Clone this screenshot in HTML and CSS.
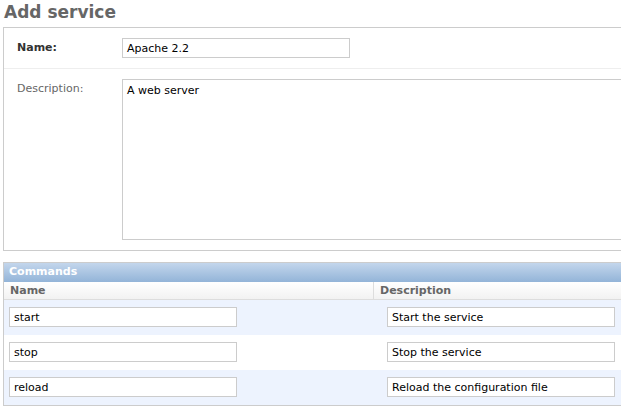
FILE: index.html
```html
<!DOCTYPE html>
<html>
<head>
<meta charset="utf-8">
<link rel="stylesheet" href="styles.css">
</head>
<body>
<div class="page">
  <h1 class="title">Add service</h1>
  <div class="fieldset">
    <div class="form-row">
      <label class="label required">Name:</label>
      <div class="field"><div class="input name-input">Apache 2.2</div></div>
    </div>
    <div class="form-row last">
      <label class="label">Description:</label>
      <div class="field grow"><div class="textarea">A web server</div></div>
    </div>
  </div>

  <div class="module">
    <div class="module-head">Commands</div>
    <div class="col-head">
      <div class="ch ch-name">Name</div>
      <div class="ch ch-desc">Description</div>
    </div>
    <div class="cmd-row alt">
      <div class="cell cell-name"><div class="input cmd-input">start</div></div>
      <div class="cell cell-desc"><div class="input cmd-input">Start the service</div></div>
    </div>
    <div class="cmd-row">
      <div class="cell cell-name"><div class="input cmd-input">stop</div></div>
      <div class="cell cell-desc"><div class="input cmd-input">Stop the service</div></div>
    </div>
    <div class="cmd-row alt">
      <div class="cell cell-name"><div class="input cmd-input">reload</div></div>
      <div class="cell cell-desc"><div class="input cmd-input">Reload the configuration file</div></div>
    </div>
  </div>
</div>
</body>
</html>
```

FILE: styles.css
```css
html, body {
  margin: 0;
  padding: 0;
  background: #fff;
}
body {
  font-family: "DejaVu Sans", Verdana, sans-serif;
  font-size: 11px;
  color: #333;
}
.page {
  padding-left: 3px;
}
.title {
  margin: 0;
  padding: 1px 0 0 1px;
  height: 26px;
  font-size: 17px;
  font-weight: bold;
  color: #666;
  line-height: 22px;
}
.fieldset {
  border: 1px solid #ccc;
  border-right: none;
}
.form-row {
  display: flex;
  padding: 10px 0 10px 13px;
  border-bottom: 1px solid #eee;
}
.form-row.last {
  border-bottom: none;
}
.label {
  flex: none;
  width: 105px;
  padding-top: 3px;
  color: #666;
}
.label.required {
  font-weight: bold;
  color: #333;
}
.field.grow {
  flex: 1;
}
.input {
  box-sizing: border-box;
  height: 20px;
  border: 1px solid #ccc;
  padding: 2px 4px 0;
  line-height: 15px;
  color: #000;
  background: #fff;
}
.name-input {
  width: 228px;
}
.textarea {
  box-sizing: border-box;
  height: 161px;
  border: 1px solid #ccc;
  border-right: none;
  padding: 3px 4px;
  color: #000;
  line-height: 15px;
}
.module {
  margin-top: 11px;
  border-left: 1px solid #ccc;
  border-top: 1px solid #ccc;
  border-bottom: 1px solid #ccc;
}
.module-head {
  height: 19px;
  line-height: 18px;
  padding-left: 5px;
  background: linear-gradient(#c3d6ec, #93b4d8);
  color: #fff;
  font-weight: bold;
}
.col-head {
  display: grid;
  grid-template-columns: 370px 1fr;
  background: linear-gradient(#fff, #f2f2f2);
  border-bottom: 1px solid #ddd;
  height: 17px;
  font-weight: bold;
  color: #666;
  line-height: 17px;
}
.ch-name {
  padding-left: 6px;
  border-right: 1px solid #ddd;
}
.ch-desc {
  padding-left: 6px;
}
.cmd-row {
  display: grid;
  grid-template-columns: 371px 1fr;
  height: 35px;
  background: #fff;
}
.cmd-row.alt {
  background: #edf3fe;
}
.cell {
  padding-top: 7px;
}
.cell-name {
  padding-left: 5px;
}
.cell-desc {
  padding-left: 12px;
}
.cmd-input {
  width: 228px;
}
```
